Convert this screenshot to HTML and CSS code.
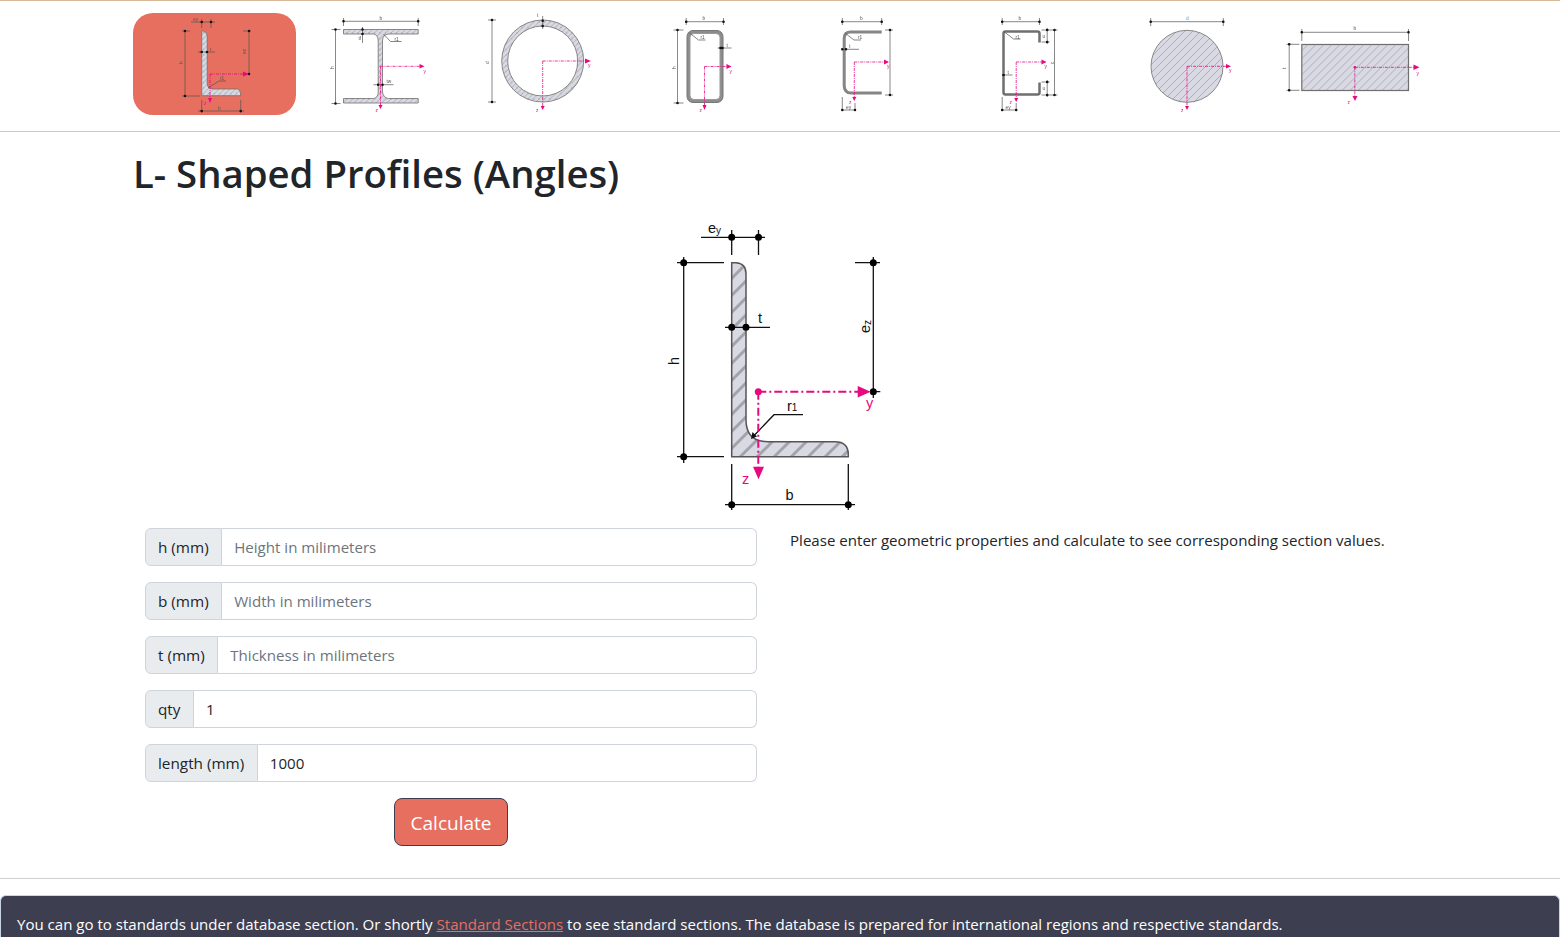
FILE: index.html
```html
<!DOCTYPE html>
<html lang="en">
<head>
<meta charset="utf-8">
<title>L- Shaped Profiles (Angles)</title>
<link rel="stylesheet" href="styles.css">
</head>
<body>
<header class="profiles">
  <a class="thumb active" href="#"><svg viewBox="133 13 162.5 102">
    <defs>
      <pattern id="hs" width="5.500" height="5.500" patternUnits="userSpaceOnUse"><rect class="hbg" width="6" height="6"/><path class="hl" d="M-1 6.500L6.500-1M-1 1.500L1.500-1M4 6.500L6.500 4"/></pattern>
      <pattern id="hm" width="8" height="8" patternUnits="userSpaceOnUse"><rect class="hbg" width="8" height="8"/><path class="hl" d="M-1 9L9-1M-1 1L1-1M7 9L9 7"/></pattern>
    </defs>
    <path class="shape" d="M201.700 31h1.500q4 1 4 5v47q0 6 6 6h24q3.500 .5 3.500 6.700h-39z"/>
    <path class="dim" d="M191 22h24M201.700 19v9M211 19v9M185 31v65M190 31h-8M200 96h-18M201.700 100v13M240.700 100v13M198 111h46M198 52h17M249 31v43M243 31h8M208 88l11-7h7"/>
    <path class="dot" d="M201.700 22h0M211 22h0M185 31h0M185 96h0M201.700 111h0M240.700 111h0M201.700 52h0M207 52h0M249 31h0M249 74h0"/>
    <path class="axis" d="M210 74h38M210 74v28"/><path class="arrow" d="M243 71.500l6 2.500-6 2.500zM208 98h4l-2 5z"/>
    <text x="193" y="20.500">ey</text><text x="210" y="51">t</text><text x="183" y="64" transform="rotate(-90 183 64)">h</text><text x="246" y="54" transform="rotate(-90 246 54)">ez</text><text x="220" y="80">r1</text><text x="218" y="110">b</text><text class="pink" x="204" y="105">z</text>
  </svg></a>
  <a class="thumb" href="#"><svg viewBox="295.500 13 162.500 102">
    <path class="shape" d="M343 29.500h74.700v4.500h-30q-5 .5-5.700 6v52q.7 5.500 5.700 6.500h30v4.500h-74.700v-4.500h30q4.700-1 4.700-6.500v-52q-.7-5.500-4.700-6h-30z"/>
    <path class="dim" d="M343 21.300h75M343 18v8M417.700 18v8M335 29.500v74M331 29.500h9M331 103.500h9M362 27v16M383 34l7 7.500h11M373 84.700h20"/>
    <path class="dot" d="M343 21.300h0M417.700 21.300h0M335 29.500h0M335 103.500h0M362 29.500h0M362 34h0M377.700 84.700h0M382 84.700h0"/>
    <path class="axis" d="M380 66.300h40M380 66.300v40"/><path class="arrow" d="M419 64l5 2.300-5 2.300zM378 105h4l-2 4z"/>
    <text x="379" y="19.500">b</text><text x="333" y="69" transform="rotate(-90 333 69)">h</text><text x="358" y="40">tf</text><text x="394" y="41">r1</text><text x="386" y="83">tw</text><text class="pink" x="423" y="72.500">y</text><text class="pink" x="375" y="112">z</text>
  </svg></a>
  <a class="thumb" href="#"><svg viewBox="458 13 162.500 102">
    <path class="shape" fill-rule="evenodd" d="M501.700 61a41 41 0 1 0 82 0a41 41 0 1 0-82 0zM507.700 61a35 35 0 1 1 70 0a35 35 0 1 1-70 0z"/>
    <path class="dim" d="M492 20v82M488 20h8M488 102h8M542.700 16v13"/>
    <path class="dot" d="M492 20h0M492 102h0M542.700 20.700h0M542.700 26h0"/>
    <path class="axis" d="M542.700 61h42M542.700 61v46"/><path class="arrow" d="M585 58.500l6 2.500-6 2.500zM540.700 106h4l-2 4z"/>
    <text x="489" y="64" transform="rotate(-90 489 64)">d</text><text x="537" y="17">t</text><text class="pink" x="588" y="67">y</text><text class="pink" x="536" y="112">z</text>
  </svg></a>
  <a class="thumb" href="#"><svg viewBox="620.500 13 162.500 102">
    <rect class="steel" x="686.500" y="30.500" width="36" height="72" rx="6"/><rect class="steel-in" x="689.500" y="33.500" width="30" height="66" rx="4"/>
    <path class="dim" d="M685.700 21.700h37.500M685.700 18v7M723 18v7M677 30v73M673 30h10M673 103h10M717 48h14M689 33l9 7h7"/>
    <path class="dot" d="M685.700 21.700h0M723 21.700h0M677 30h0M677 103h0M720 48h0M722 48h0"/>
    <path class="axis" d="M704 66.500h24M704 66.500v40"/><path class="arrow" d="M726 64l5 2.500-5 2.500zM702 105h4l-2 5z"/>
    <text x="702" y="19.500">b</text><text x="675" y="69" transform="rotate(-90 675 69)">h</text><text x="726" y="47">t</text><text x="700" y="39">r1</text><text class="pink" x="729" y="72.500">y</text><text class="pink" x="699" y="112">z</text>
  </svg></a>
  <a class="thumb" href="#"><svg viewBox="783 13 162.500 102">
    <path class="steel-line" d="M881.700 32h-31q-6.500 0-6.500 6.500v47q0 7.500 7 7.500h30.500"/>
    <path class="dim" d="M842.300 21.700h39.500M842.300 18v7M881.700 18v7M890 30v65M885 30h8M885 95h8M842 49.300h17M845 33l9 7h7M842.300 97v14M855 103v8M842.300 110h13"/>
    <path class="dot" d="M842.300 21.700h0M881.700 21.700h0M890 30h0M890 95h0M842.300 49.300h0M846 49.300h0M842.300 110h0M855 110h0"/>
    <path class="axis" d="M854.300 62h33M854.300 62v36"/><path class="arrow" d="M884 59.500l5 2.500-5 2.500zM852.300 97h4l-2 4z"/>
    <text x="860" y="19.500">b</text><text x="849" y="48">t</text><text x="858" y="39">r1</text><text x="846" y="109">ey</text><text class="pink" x="887" y="68">y</text><text class="pink" x="849" y="104">z</text>
  </svg></a>
  <a class="thumb" href="#"><svg viewBox="945.500 13 162.500 102">
    <path class="steel-line thin" d="M1039 42.500v-9q0-2-2-2h-32q-2 0-2 2v59q0 2 2 2h32q2 0 2-2v-10"/>
    <path class="dim" d="M1001.700 21.700h37.500M1001.700 18v7M1039 18v7M1054 30v65M1049 30h8M1049 95h8M1046.700 28v16M1046.700 80v17M1041 30h8M1041 42h8M1041 82h8M1041 95h8M1002 75h10M1004 32l9 7h7M1001.700 97v14M1015.700 103v8M1001.700 110h14"/>
    <path class="dot" d="M1001.700 21.700h0M1039 21.700h0M1054 30h0M1054 95h0M1046.700 30h0M1046.700 42h0M1046.700 82h0M1046.700 95h0M1003 75h0M1001.700 110h0M1015.700 110h0"/>
    <path class="axis" d="M1015.700 62h29M1015.700 62v40"/><path class="arrow" d="M1041 59.500l5 2.500-5 2.500zM1013.700 98h4l-2 4z"/>
    <text x="1018" y="19.500">b</text><text x="1007" y="74">t</text><text x="1015" y="39">r1</text><text x="1005" y="109">ey</text><text x="1042" y="38">u</text><text x="1042" y="90">u</text><text x="1053" y="64" transform="rotate(-90 1053 64)">c</text><text class="pink" x="1044" y="68">y</text><text class="pink" x="1009" y="104">z</text>
  </svg></a>
  <a class="thumb" href="#"><svg viewBox="1108 13 162.500 102">
    <circle class="shape wide" cx="1187" cy="66.300" r="36"/>
    <path class="dim" d="M1150.700 21.700h72.600M1150.700 18v8M1223.300 18v8"/>
    <path class="dot" d="M1150.700 21.700h0M1223.300 21.700h0"/>
    <path class="axis" d="M1187 66.300h40M1187 66.300v40"/><path class="arrow" d="M1226 64l5 2.300-5 2.300zM1185 106h4l-2 4z"/>
    <text class="blue" x="1186" y="20">d</text><text class="pink" x="1229" y="72">y</text><text class="pink" x="1181" y="112">z</text>
  </svg></a>
  <a class="thumb" href="#"><svg viewBox="1270.500 13 162.500 102">
    <rect class="shape wide heavy" x="1301.300" y="44.500" width="106.700" height="46"/>
    <path class="dim" d="M1301.300 32.300h106.700M1301.300 29v12M1408 29v12M1288.700 44.300v46M1286 44.300h13M1286 90.300h13"/>
    <path class="dot" d="M1301.300 32.300h0M1408 32.300h0M1288.700 44.300h0M1288.700 90.300h0"/>
    <path class="axis" d="M1354.300 67.300h59M1354.300 67.300v30"/><path class="arrow" d="M1413 64.500l6 2.800-6 2.800zM1352 96h5l-2.500 5z"/><circle class="arrow" cx="1354.300" cy="67.300" r="1.200"/>
    <text x="1353" y="29.500">b</text><text x="1285" y="69" transform="rotate(-90 1285 69)">t</text><text class="pink" x="1416" y="75">y</text><text class="pink" x="1347" y="104">z</text>
  </svg></a>
</header>

<main>
  <h1 class="title">L- Shaped Profiles (Angles)</h1>
  <svg class="diagram" viewBox="660 220 240 295">
    <defs><pattern id="hb" width="17" height="17" patternUnits="userSpaceOnUse" x="731" y="262"><rect class="hbg" width="17" height="17"/><path class="hlb" d="M-2 19L19-2M-2 2L2-2M15 19L19 15"/></pattern></defs>
    <path class="big-shape" d="M731.700 262.700h4q10.300 .5 10.300 11v146q0 22 22 22h67q13.300 0 13.300 13v2h-116.600z"/>
    <path class="big-dim" d="M701 237.300h64M731.700 230v25M758.500 230v25M677 262.700h47M683.700 257v206M677 456.700h47M725 327.300h45M855 262.700h25M873.300 257v141M873.300 391.700h7M725 504.700h130M731.700 464v46M848.300 464v46M803 414.700h-29l-22 23"/>
    <path class="big-arrow-k" d="M751 439l1.500-7 4.500 4.500z"/>
    <path class="big-dot" d="M731.700 237.300h0M758.500 237.300h0M683.700 262.700h0M683.700 456.700h0M731.700 327.300h0M746 327.300h0M873.300 262.700h0M873.300 391.700h0M731.700 504.700h0M848.300 504.700h0"/>
    <path class="big-axis" d="M758.300 391.700h100M758.300 391.700v76"/>
    <path class="arrow" d="M857.700 386l13 5.700-13 5.700zM753 466.700h11l-5.500 12.500z"/>
    <circle class="arrow" cx="758.300" cy="391.700" r="3.500"/>
    <text class="big-t" x="708" y="233">e<tspan class="sub" dy="1">y</tspan></text>
    <text class="big-t" x="758" y="323">t</text>
    <text class="big-t" x="679" y="365" transform="rotate(-90 679 365)">h</text>
    <text class="big-t" x="870" y="333" transform="rotate(-90 870 333)">e<tspan class="sub" dy="1">z</tspan></text>
    <text class="big-t" x="787" y="411">r<tspan class="sub">1</tspan></text>
    <text class="big-t" x="785.500" y="500">b</text>
    <text class="big-t big-pink" x="866" y="408">y</text>
    <text class="big-t big-pink" x="742" y="484">z</text>
  </svg>

  <section class="content">
    <form class="calc">
      <div class="group"><label class="addon">h (mm)</label><input class="field" placeholder="Height in milimeters"></div>
      <div class="group"><label class="addon">b (mm)</label><input class="field" placeholder="Width in milimeters"></div>
      <div class="group"><label class="addon">t (mm)</label><input class="field" placeholder="Thickness in milimeters"></div>
      <div class="group"><label class="addon">qty</label><input class="field" value="1"></div>
      <div class="group"><label class="addon">length (mm)</label><input class="field" value="1000"></div>
      <button class="calculate" type="button">Calculate</button>
    </form>
    <p class="hint">Please enter geometric properties and calculate to see corresponding section values.</p>
  </section>
  <hr class="rule">
</main>

<footer class="foot">
  <p class="foot-text">You can go to standards under database section. Or shortly <a href="#">Standard Sections</a> to see standard sections. The database is prepared for international regions and respective standards.</p>
</footer>
</body>
</html>
```

FILE: styles.css
```css
html, body { margin: 0; height: 937px; overflow: hidden; }
body { font-family: "Open Sans", "Noto Sans", sans-serif; font-size: 15.08px; line-height: 24px; color: #212529; background: #fff; }

.profiles { display: grid; grid-template-columns: repeat(8, 162.5px); padding: 12px 0 16px 133px; border-top: 1px solid #d8b99a; border-bottom: 1px solid #c9c9c9; }
.thumb { display: block; height: 102px; border-radius: 20px; }
.thumb svg { display: block; width: 100%; height: 102px; filter: blur(.3px); }
.thumb.active { background: #e76f5f; }
.thumb text { font: 4.800px "Liberation Sans", sans-serif; fill: #555; }
.thumb text.pink { fill: #e6097f; }
.thumb text.blue { fill: #5aa0d0; }
.hbg { fill: #d9d9e3; }
.shape { fill: url(#hs); stroke: #6f6f6f; stroke-width: .8; }
.shape.wide { fill: url(#hm); }
.shape.heavy { stroke-width: 1.200; }
.hl { stroke: #a9a9b2; stroke-width: .9; fill: none; }
.steel { fill: #8c8c8c; stroke: #777; stroke-width: 1; }
.steel-in { fill: #fff; stroke: #999; stroke-width: 1; }
.steel-line { fill: none; stroke: #858585; stroke-width: 3; }
.steel-line.thin { stroke-width: 2.500; stroke: #6f6f6f; }
.dim { fill: none; stroke: #555; stroke-width: .7; }
.dot { fill: none; stroke: #111; stroke-width: 2.600; stroke-linecap: round; }
.axis { fill: none; stroke: #e6097f; stroke-width: .8; stroke-dasharray: 3 1 1 1; }
.arrow { fill: #e6097f; }

.title { margin: 17px 0 0 133px; font-size: 38.300px; line-height: 48px; font-weight: 600; }
.diagram { display: block; width: 240px; height: 295px; margin: 23px auto 0; }
.big-shape { fill: url(#hb); stroke: #555; stroke-width: 1.500; }
.hlb { stroke: #a3a3ac; stroke-width: 3; fill: none; }
.big-dim { fill: none; stroke: #111; stroke-width: 1.300; }
.big-arrow-k { fill: #111; }
.big-dot { fill: none; stroke: #000; stroke-width: 7; stroke-linecap: round; }
.big-axis { fill: none; stroke: #e6097f; stroke-width: 2; stroke-dasharray: 8 3 2 3; }
.big-t { font: 14.500px "Liberation Sans", sans-serif; fill: #111; }
.big-t .sub { font-size: 10px; }
.big-pink { fill: #e6097f; }

.content { display: flex; gap: 33px; margin: 13px 0 0 145px; }
.calc { display: flex; flex-direction: column; gap: 16px; width: 612px; }
.group { display: flex; height: 38px; }
.addon { display: flex; align-items: center; padding: 0 12.500px 0 12px; font-size: 15.300px; background: #e9ecef; border: 1px solid #ced4da; border-radius: 6px 0 0 6px; white-space: nowrap; }
.field { flex: 1; min-width: 0; padding: 0 12px; border: 1px solid #ced4da; border-left: 0; border-radius: 0 6px 6px 0; font: inherit; color: #212529; outline: 0; }
.field::placeholder { color: #6c757d; opacity: 1; }
.calculate { align-self: center; width: 114px; height: 48px; padding: 2px 0 0; font: inherit; font-size: 19px; color: #fff; background: #e76f5f; border: 1px solid #3d3e50; border-radius: 8px; }
.hint { margin: 0; }
.rule { margin: 32px 0 16px; border: 0; border-top: 1px solid #cfcfcf; }

.foot { height: 60px; background: #3d3e50; border: 1px solid #c9d6e8; border-bottom: 0; border-radius: 6px 6px 0 0; color: #fff; }
.foot-text { margin: 15.500px 0 0 16px; font-size: 15.050px; }
.foot-text a { color: #e76f5f; }
```
